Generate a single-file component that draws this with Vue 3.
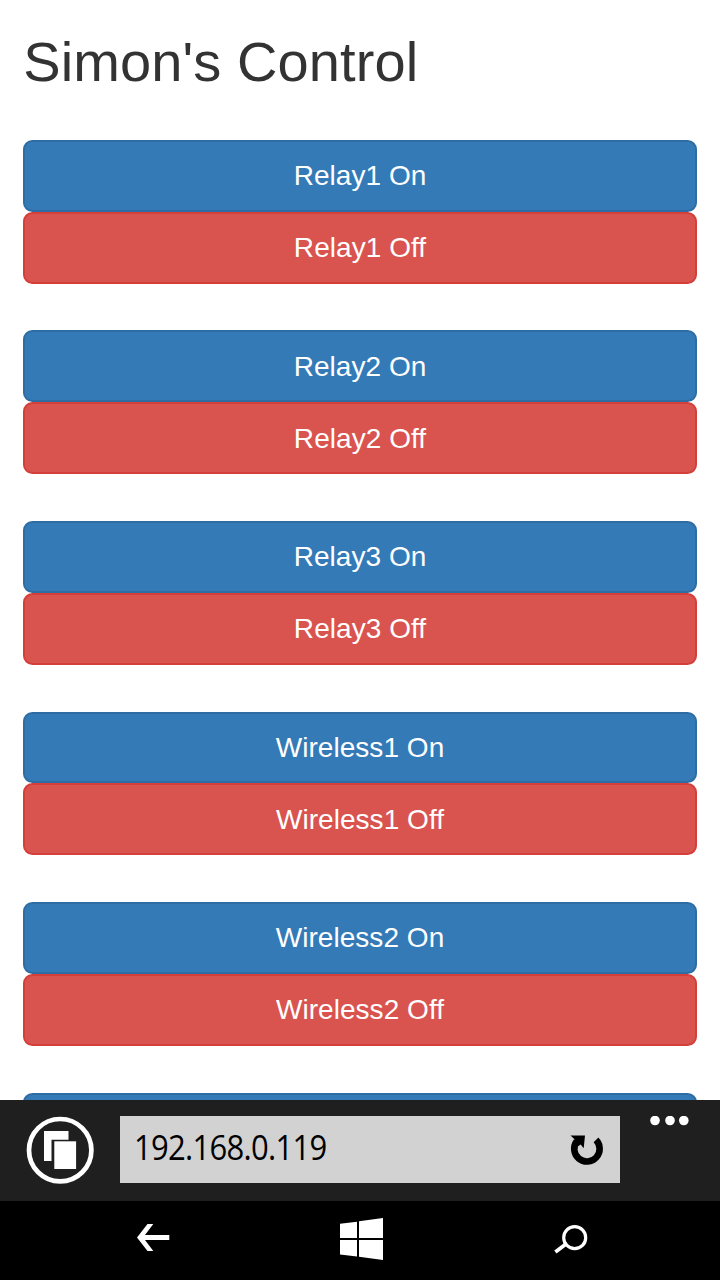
<script setup>
const names = ['Relay1', 'Relay2', 'Relay3', 'Wireless1', 'Wireless2', 'Wireless3']
</script>

<template>
  <div class="phone">
    <main class="page">
      <h1>Simon's Control</h1>
      <section v-for="name in names" :key="name" class="group">
        <button class="btn on">{{ name }} On</button>
        <button class="btn off">{{ name }} Off</button>
      </section>
    </main>
    <footer class="bar">
      <svg class="tabs" width="68" height="68" viewBox="0 0 68 68">
        <circle cx="34.2" cy="34.2" r="31.2" fill="none" stroke="#fff" stroke-width="4.7" />
        <path d="M18 15H42.5V23.7H25.5V45H18Z" fill="#fff" />
        <rect x="28.3" y="25.3" width="21.8" height="27.7" fill="#fff" />
      </svg>
      <div class="address">
        <span class="ip">192.168.0.119</span>
        <svg class="reload" width="34" height="34" viewBox="0 0 34 34">
          <path d="M26 6.9A12.7 12.7 0 1 1 6.7 8.3" fill="none" stroke="#000" stroke-width="6.6" />
          <path d="M0.5 2.4H15L13.7 15.2L10.6 11.6L7 14L2.8 9L4.8 6.6Z" fill="#000" />
        </svg>
      </div>
      <svg class="more" width="40" height="10" viewBox="0 0 40 10">
        <circle cx="5" cy="4.5" r="4.8" fill="#fff" />
        <circle cx="20" cy="4.5" r="4.8" fill="#fff" />
        <circle cx="33.8" cy="4.5" r="4.8" fill="#fff" />
      </svg>
    </footer>
    <nav class="keys">
      <svg class="back" width="34" height="28" viewBox="0 0 34 28">
        <path d="M0 13.5L10.5 0H16.3L8 11H32.3V16H8L16.3 27H10.5Z" fill="#fff" />
      </svg>
      <svg class="start" width="44" height="42" viewBox="0 0 44 42">
        <path d="M0 5.8L17 3.8V20H0ZM19 3.2L43 0V20H19ZM0 22H17V38.5L0 36.4ZM19 22H43V42L19 38.8Z" fill="#fff" />
      </svg>
      <svg class="search" width="34" height="29" viewBox="0 0 34 29">
        <circle cx="20.7" cy="12.7" r="11" fill="none" stroke="#fff" stroke-width="3.2" />
        <path d="M12 19L1.4 27" stroke="#fff" stroke-width="3.8" />
      </svg>
    </nav>
  </div>
</template>

<style>
body { margin: 0; background: #fff; }
</style>

<style scoped>
.phone { width: 720px; height: 1280px; display: flex; flex-direction: column; overflow: hidden; background: #fff; }
.page { height: 1100px; flex: none; overflow: hidden; padding: 0 23.3px; box-sizing: border-box; font-family: "Liberation Sans", Arial, sans-serif; }
h1 { margin: 31px 0 47.2px; font-size: 56px; line-height: 61.6px; font-weight: 400; letter-spacing: 0.1px; color: #333; }
.group { display: flex; flex-direction: column; margin-bottom: 46.86px; }
.btn { height: 71.87px; flex: none; box-sizing: border-box; border: 2px solid; border-radius: 9.3px; padding: 0.8px 0 0; font: 28px/38px "Liberation Sans", Arial, sans-serif; letter-spacing: 0.05px; color: #fff; }
.on { background: #337ab7; border-color: #2e6da4; }
.off { background: #d9534f; border-color: #d43f3a; }
.bar { height: 101px; flex: none; box-sizing: border-box; padding: 16px 30px 0 26px; display: flex; align-items: flex-start; background: #1f1f1f; }
.address { width: 500px; height: 67px; margin-left: 26px; box-sizing: border-box; padding: 0 16px 0 13.5px; display: flex; align-items: center; justify-content: space-between; background: #d2d2d2; }
.ip { font: 35px/62px "Open Sans", "Noto Sans", sans-serif; letter-spacing: -0.8px; color: #000; height: 67px; white-space: nowrap; transform: scaleX(0.886); transform-origin: left; }
.more { margin-left: auto; }
.keys { height: 79px; flex: none; box-sizing: border-box; padding: 0 132px 0 137px; display: flex; align-items: flex-start; justify-content: space-between; background: #000; }
.back { margin-top: 23px; }
.start { margin: 17px 1px 0 -1px; }
.search { margin-top: 24px; }
</style>
